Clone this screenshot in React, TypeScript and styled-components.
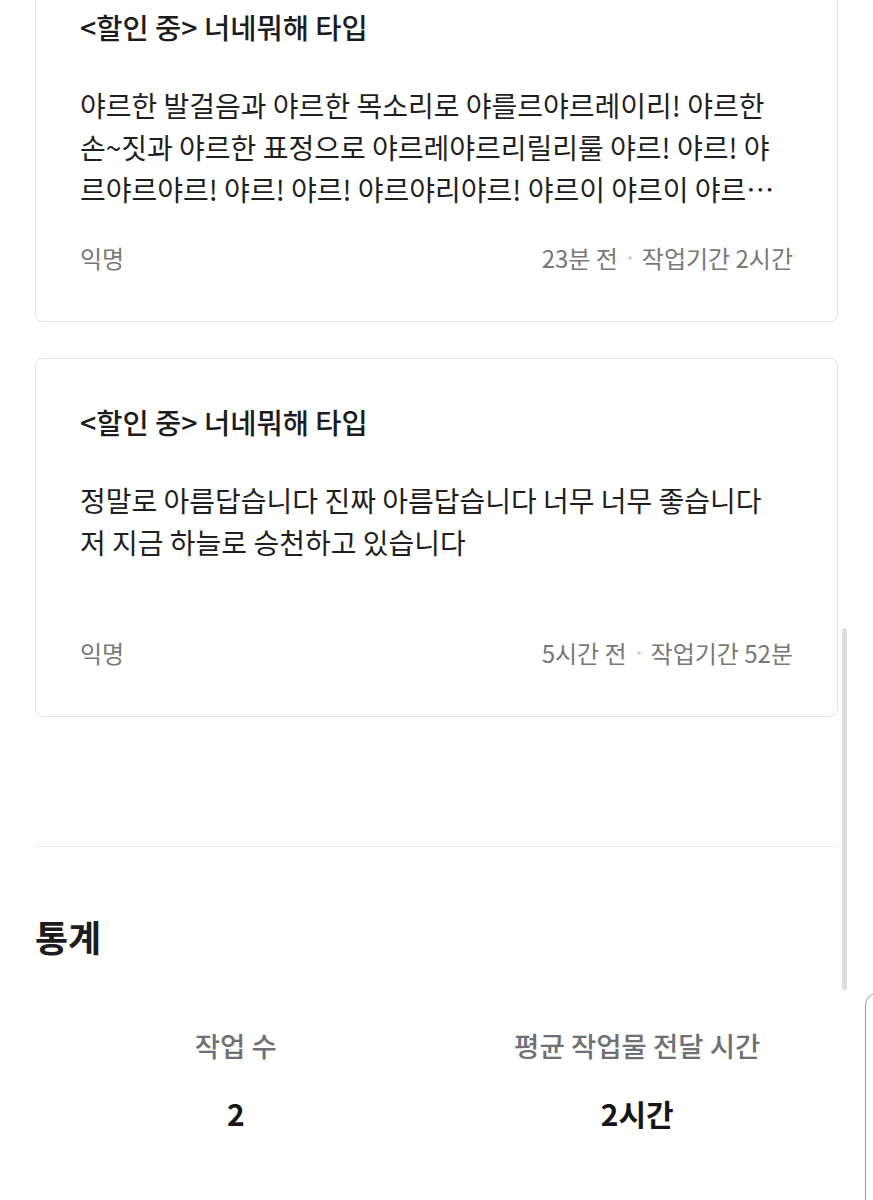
import React from "react";
import styled, {createGlobalStyle} from "styled-components";

interface Review {
    title: string;
    body: string;
    author: string;
    ago: string;
    duration: string;
}

const reviews: Review[] = [
    {
        title: "<할인 중> 너네뭐해 타입",
        body: "야르한 발걸음과 야르한 목소리로 야를르야르레이리! 야르한 손~짓과 야르한 표정으로 야르레야르리릴리룰 야르! 야르! 야르야르야르! 야르! 야르! 야르야리야르! 야르이 야르이 야르…",
        author: "익명",
        ago: "23분 전",
        duration: "작업기간 2시간",
    },
    {
        title: "<할인 중> 너네뭐해 타입",
        body: "정말로 아름답습니다 진짜 아름답습니다 너무 너무 좋습니다\n저 지금 하늘로 승천하고 있습니다",
        author: "익명",
        ago: "5시간 전",
        duration: "작업기간 52분",
    },
];

const stats = [
    {label: "작업 수", value: "2"},
    {label: "평균 작업물 전달 시간", value: "2시간"},
];

export default function App() {
    return (
        <>
            <GlobalStyle/>
            <Page>
                <ReviewList>
                    {reviews.map((review, i) => (
                        <ReviewCard key={i}>
                            <ReviewTitle>{review.title}</ReviewTitle>
                            <ReviewBody>{review.body}</ReviewBody>
                            <ReviewFooter>
                                <span>{review.author}</span>
                                <MetaGroup>
                                    <span>{review.ago}</span>
                                    <MetaDot/>
                                    <span>{review.duration}</span>
                                </MetaGroup>
                            </ReviewFooter>
                        </ReviewCard>
                    ))}
                </ReviewList>
                <Divider/>
                <SectionTitle>통계</SectionTitle>
                <StatsGrid>
                    {stats.map((stat) => (
                        <StatItem key={stat.label}>
                            <StatLabel>{stat.label}</StatLabel>
                            <StatValue>{stat.value}</StatValue>
                        </StatItem>
                    ))}
                </StatsGrid>
            </Page>
            <ScrollThumb/>
            <SidePanelEdge/>
        </>
    );
}

const GlobalStyle = createGlobalStyle`
    html, body {
        margin: 0;
        padding: 0;
        background: #ffffff;
        overflow: hidden;
    }

    body {
        font-family: "Noto Sans CJK KR", "Noto Sans", sans-serif;
        color: #1f1f1f;
    }
`

const Page = styled.div`
    box-sizing: border-box;
    width: 873px;
    height: 1200px;
    padding: 0 35px;
    overflow: hidden;
`

const ReviewList = styled.div`
    display: flex;
    flex-direction: column;
    gap: 36px;
    margin-top: -37px;
`

const ReviewCard = styled.div`
    box-sizing: border-box;
    display: flex;
    flex-direction: column;
    border: 1px solid #e4e4e4;
    border-radius: 8px;
    padding: 44px 44px 47px;
    background: #ffffff;
`

const ReviewTitle = styled.div`
    font-size: 28.5px;
    font-weight: 500;
    line-height: 38px;
    color: #1c1c1c;
    margin-bottom: 38px;
`

const ReviewBody = styled.div`
    font-size: 28px;
    line-height: 42px;
    height: 126px;
    color: #1f1f1f;
    white-space: pre-line;
    display: -webkit-box;
    -webkit-box-orient: vertical;
    -webkit-line-clamp: 3;
    overflow: hidden;
`

const ReviewFooter = styled.div`
    display: flex;
    justify-content: space-between;
    align-items: center;
    margin-top: 32px;
    font-size: 24px;
    line-height: 32px;
    color: #787878;
`

const MetaGroup = styled.div`
    display: flex;
    align-items: center;
`

const MetaDot = styled.span`
    width: 4px;
    height: 4px;
    border-radius: 50%;
    background: #d2d2d2;
    margin: 0 10px;
`

const Divider = styled.div`
    height: 1px;
    background: #efefef;
    margin-top: 129px;
`

const SectionTitle = styled.h2`
    margin: 69px 0 0;
    font-size: 36px;
    font-weight: 700;
    line-height: 40px;
    color: #1c1c1c;
`

const StatsGrid = styled.div`
    display: grid;
    grid-template-columns: 1fr 1fr;
    margin-top: 73px;
`

const StatItem = styled.div`
    display: flex;
    flex-direction: column;
    align-items: center;
    gap: 32px;
`

const StatLabel = styled.div`
    font-size: 27.5px;
    line-height: 32px;
    font-weight: 500;
    color: #6e7077;
`

const StatValue = styled.div`
    font-size: 30px;
    line-height: 40px;
    font-weight: 700;
    color: #161616;
`

const ScrollThumb = styled.div`
    position: fixed;
    left: 842px;
    top: 628px;
    width: 5px;
    height: 362px;
    border-radius: 3px;
    background: #dedede;
`

const SidePanelEdge = styled.div`
    position: fixed;
    left: 865px;
    top: 993px;
    width: 40px;
    height: 260px;
    border: 1.5px solid #9a9a9a;
    border-radius: 12px 0 0 0;
    background: #ffffff;
`
